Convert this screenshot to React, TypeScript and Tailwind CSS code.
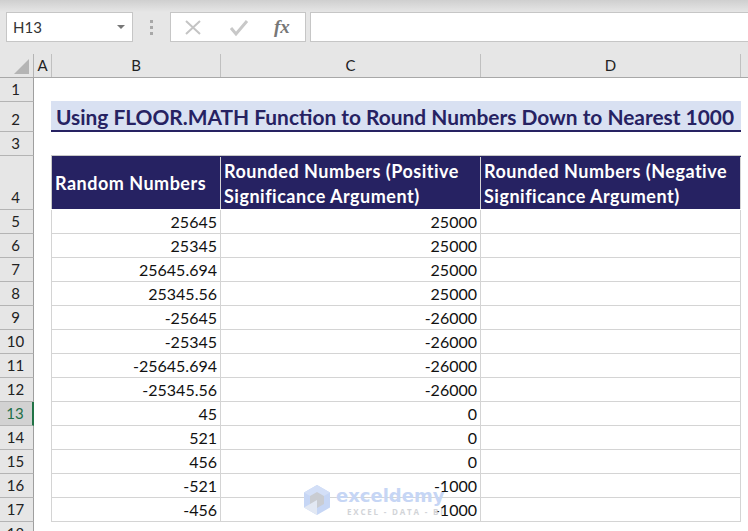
import React from "react";

const rows: [string, string, string][] = [
  ["5", "25645", "25000"],
  ["6", "25345", "25000"],
  ["7", "25645.694", "25000"],
  ["8", "25345.56", "25000"],
  ["9", "-25645", "-26000"],
  ["10", "-25345", "-26000"],
  ["11", "-25645.694", "-26000"],
  ["12", "-25345.56", "-26000"],
  ["13", "45", "0"],
  ["14", "521", "0"],
  ["15", "456", "0"],
  ["16", "-521", "-1000"],
  ["17", "-456", "-1000"],
];

const font = { fontFamily: "Lato, 'Open Sans', sans-serif" };

function RowHead({ n, h, active }: { n: string; h: string; active?: boolean }) {
  return (
    <div className={`${h} flex items-end justify-center w-[34px] shrink-0 pb-px border-b border-r border-b-[#b4b4b4] text-[15px] leading-[22px] ${active ? "bg-[#d2d2d2] text-[#1f6f47] border-r-2 border-r-[#217346]" : "bg-[#e6e6e6] text-[#222] border-r-[#9f9f9f]"}`}>
      <span className="pr-0.5">{n}</span>
    </div>
  );
}

function Logo() {
  return (
    <svg width="28" height="32" viewBox="0 0 28 32" className="shrink-0">
      <polygon points="14,1 27,8.500 27,23.500 14,31 1,23.500 1,8.500" fill="#c6d6f5" />
      <polygon points="14,1 27,8.500 14,16 1,8.500" fill="#d3dff7" />
      <polygon points="14,8 21,12 21,20 14,24 7,20 7,12" fill="#c9ccd2" />
      <polygon points="1,23.500 14,16 14,31" fill="#e2e8f3" />
    </svg>
  );
}

export default function App() {
  return (
    <div className="w-[748px] h-[531px] overflow-hidden bg-white relative text-black" style={font}>
      <div className="h-[54px] bg-[#e6e6e6] relative">
        <div className="h-3 bg-gradient-to-b from-[#cfcfcf] to-[#e6e6e6]" />
        <div className="flex items-start">
          <div className="ml-1.5 w-[127px] h-[30px] bg-white border border-[#c6c6c6] flex items-center justify-between pl-[6px] pr-[5px] text-[15px] text-[#333]">
            <span>H13</span>
            <span className="w-0 h-0 border-x-[4px] border-x-transparent border-t-[4px] border-t-[#777] mr-0.5" />
          </div>
          <div className="w-[37px] h-[30px] flex flex-col items-center justify-center gap-[3px]">
            <span className="w-[3px] h-[3px] bg-[#a8a8a8]" />
            <span className="w-[3px] h-[3px] bg-[#a8a8a8]" />
            <span className="w-[3px] h-[3px] bg-[#a8a8a8]" />
          </div>
          <div className="w-[136px] h-[30px] bg-white border border-[#c6c6c6] flex items-center">
            <svg width="134" height="28" viewBox="0 0 134 28" fill="none">
              <path d="M15 8 L29 21 M29 8 L15 21" stroke="#c4c4c4" strokeWidth="2" />
              <path d="M60 15 L65 21 L76 8" stroke="#c8c8c8" strokeWidth="3" />
              <text x="103" y="20" fontFamily="'Liberation Serif', serif" fontStyle="italic" fontWeight="700" fontSize="19" fill="#777">fx</text>
            </svg>
          </div>
          <div className="ml-1 flex-1 h-[30px] bg-white border-y border-l border-[#c6c6c6]" />
        </div>
      </div>

      <div className="flex h-6 bg-[#e6e6e6] border-b border-[#a8a8a8] text-[15px] text-[#222] leading-[23px] text-center">
        <div className="w-[34px] shrink-0 border-r border-[#b4b4b4] flex items-end justify-end pr-[4px] pb-[3px]">
          <span className="w-0 h-0 border-l-[15px] border-l-transparent border-b-[15px] border-b-[#b4b4b4]" />
        </div>
        <div className="w-[18px] shrink-0 border-r border-[#c0c0c0]">A</div>
        <div className="w-[169px] shrink-0 border-r border-[#c0c0c0]">B</div>
        <div className="w-[260px] shrink-0 border-r border-[#c0c0c0]">C</div>
        <div className="w-[260px] shrink-0 border-r border-[#c0c0c0]">D</div>
      </div>

      <div className="flex">
        <div className="flex flex-col">
          <div className="h-px w-[34px] bg-[#e6e6e6] border-r border-[#9f9f9f]" />
          <RowHead n="1" h="h-[23px]" />
          <RowHead n="2" h="h-[30px]" />
          <RowHead n="3" h="h-6" />
          <RowHead n="4" h="h-[54px]" />
          {rows.map((r) => (
            <RowHead key={r[0]} n={r[0]} h="h-6" active={r[0] === "13"} />
          ))}
          <RowHead n="18" h="h-6" />
        </div>
        <div className="pl-[17px] flex flex-col">
          <div className="h-[23px]" />
          <div className="w-[690px] h-[31px] bg-[#d9e1f2] border-b-2 border-[#262262] pl-[5px] text-[20.900px] leading-[31px] font-bold text-[#262262] whitespace-nowrap">
            Using FLOOR.MATH Function to Round Numbers Down to Nearest 1000
          </div>
          <div className="h-[23px]" />
          <div className="flex h-[54px] pt-px bg-[#262262] text-white font-bold text-[18px] tracking-[0.5px] leading-[25px] border-t border-[#c8c8c8] border-l">
            <div className="w-[169px] border-r border-[#d4d4d4] pl-[3px] flex items-center">Random Numbers</div>
            <div className="w-[260px] border-r border-[#d4d4d4] pl-[3px] flex items-center">
              <span className="mt-[2px]">Rounded Numbers (Positive<br />Significance Argument)</span>
            </div>
            <div className="w-[260px] border-r border-[#d4d4d4] pl-[3px] flex items-center">
              <span className="mt-[2px]">Rounded Numbers (Negative<br />Significance Argument)</span>
            </div>
          </div>
          <div className="flex flex-col pt-px">
            {rows.map((r) => (
              <div key={r[0]} className="flex h-6 border-b border-l border-[#d4d4d4] text-[16px] leading-[23px] text-right text-[#111]">
                <div className="w-[169px] border-r border-[#d4d4d4] pr-[3px]">{r[1]}</div>
                <div className="w-[260px] border-r border-[#d4d4d4] pr-[3px]">{r[2]}</div>
                <div className="w-[260px] border-r border-[#d4d4d4]" />
              </div>
            ))}
          </div>
        </div>
      </div>

      <div className="absolute left-[303px] top-[484px] flex items-start gap-[5px] pointer-events-none">
        <Logo />
        <div className="flex flex-col">
          <span className="leading-[23px] font-bold text-[#c6d6f5]" style={{ fontFamily: "'DejaVu Sans', sans-serif", fontSize: 18 }}>exceldemy</span>
          <span className="ml-[11px] text-[8px] leading-[10px] font-bold tracking-[1.800px] text-[#d2d4d8] whitespace-nowrap" style={{ fontFamily: "'Open Sans', sans-serif" }}>EXCEL - DATA - BI</span>
        </div>
      </div>
    </div>
  );
}
